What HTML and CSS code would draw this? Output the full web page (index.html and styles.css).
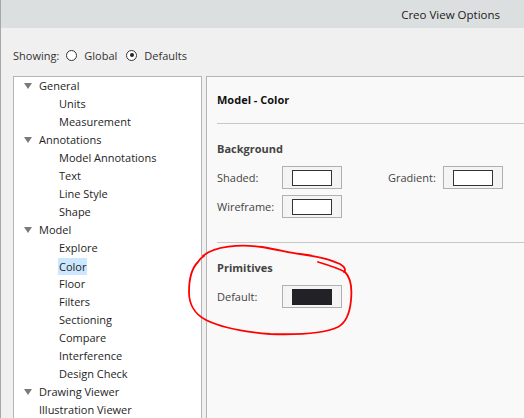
FILE: index.html
```html
<!DOCTYPE html>
<html>
<head>
<meta charset="utf-8">
<link rel="stylesheet" href="styles.css">
</head>
<body>
<div class="window">
  <div class="titlebar"><span class="title">Creo View Options</span></div>
  <div class="content">
    <div class="showing">
      <span class="lbl">Showing:</span>
      <span class="radio"><span class="circle"></span>Global</span>
      <span class="radio"><span class="circle checked"></span>Defaults</span>
    </div>
    <div class="panes">
      <div class="tree">
        <div class="node l1"><span class="tri"></span>General</div>
        <div class="node l2">Units</div>
        <div class="node l2">Measurement</div>
        <div class="node l1"><span class="tri"></span>Annotations</div>
        <div class="node l2">Model Annotations</div>
        <div class="node l2">Text</div>
        <div class="node l2">Line Style</div>
        <div class="node l2">Shape</div>
        <div class="node l1"><span class="tri"></span>Model</div>
        <div class="node l2">Explore</div>
        <div class="node l2"><span class="sel">Color</span></div>
        <div class="node l2">Floor</div>
        <div class="node l2">Filters</div>
        <div class="node l2">Sectioning</div>
        <div class="node l2">Compare</div>
        <div class="node l2">Interference</div>
        <div class="node l2">Design Check</div>
        <div class="node l1"><span class="tri"></span>Drawing Viewer</div>
        <div class="node l1">Illustration Viewer</div>
      </div>
      <div class="detail">
        <div class="heading">Model - Color</div>
        <div class="section">
          <div class="sec-title">Background</div>
          <div class="grid">
            <span class="flabel">Shaded:</span>
            <span class="swatch"><span class="chip white"></span></span>
            <span class="flabel grad">Gradient:</span>
            <span class="swatch"><span class="chip white"></span></span>
            <span class="flabel">Wireframe:</span>
            <span class="swatch"><span class="chip white"></span></span>
          </div>
        </div>
        <div class="section">
          <div class="sec-title">Primitives</div>
          <div class="grid">
            <span class="flabel">Default:</span>
            <span class="swatch"><span class="chip dark"></span></span>
          </div>
        </div>
      </div>
    </div>
  </div>
  <svg class="scribble" width="524" height="418" viewBox="0 0 524 418">
    <path d="M203,256 C214,246 240,244 262,247 C280,250 290,253 300,254 C315,256 330,259 340,264 C345,267 346,270 344,272 M318,262 C328,265 338,268 345,272 C351,278 352,290 351,300 C350,312 347,322 338,327 C325,333 300,335 270,334 C245,332 222,328 206,320 C194,314 189,303 189,292 C189,280 192,268 198,262 C200,259 202,257 204,256"/>
  </svg>
</div>
</body>
</html>
```
FILE: styles.css
```css
html, body {
  margin: 0;
  padding: 0;
}
body {
  width: 524px;
  height: 418px;
  overflow: hidden;
  font-family: "Open Sans", "Noto Sans", sans-serif;
  font-size: 11px;
  color: #1e1e1e;
}
.window {
  position: relative;
  width: 524px;
  height: 418px;
  overflow: hidden;
  background: #f0f0f0;
  border-left: 1px solid #a8a8a8;
  box-sizing: border-box;
}
.titlebar {
  height: 28px;
  background: #dcdfe0;
  display: flex;
  align-items: center;
  justify-content: flex-end;
  padding-right: 24px;
}
.title {
  font-size: 11.5px;
  color: #1a1a1a;
}
.content {
  padding-left: 12px;
}
.showing {
  height: 48px;
  display: flex;
  align-items: center;
  padding-top: 6px;
  box-sizing: border-box;
  color: #333;
}
.lbl {
  margin-right: 7px;
}
.radio {
  display: inline-flex;
  align-items: center;
  margin-right: 9px;
}
.circle {
  width: 11px;
  height: 11px;
  border: 1px solid #333;
  border-radius: 50%;
  background: #fff;
  margin-right: 7px;
  box-sizing: border-box;
  position: relative;
}
.circle.checked::after {
  content: "";
  position: absolute;
  left: 2.5px;
  top: 2.5px;
  width: 4px;
  height: 4px;
  border-radius: 50%;
  background: #222;
}
.panes {
  display: flex;
  gap: 4px;
  height: 342px;
  overflow: hidden;
}
.tree {
  width: 189px;
  flex: none;
  height: 360px;
  background: #fff;
  border: 1px solid #b5b5b5;
  box-sizing: border-box;
}
.node {
  height: 18px;
  line-height: 18px;
  white-space: nowrap;
  color: #1e1e1e;
  display: flex;
  align-items: center;
}
.l1 {
  padding-left: 25px;
}
.l2 {
  padding-left: 45px;
}
.tri {
  width: 0;
  height: 0;
  border-left: 4px solid transparent;
  border-right: 4px solid transparent;
  border-top: 6px solid #7a7a7a;
  margin-left: -15px;
  margin-right: 7px;
}
.sel {
  background: #cce8ff;
  padding: 0 1px;
  margin-left: -1px;
  height: 17px;
  line-height: 17px;
}
.detail {
  flex: 1;
  height: 360px;
  background: #f9f9f9;
  border: 1px solid #b5b5b5;
  border-right: none;
  box-sizing: border-box;
  padding-left: 10px;
}
.heading {
  height: 46px;
  line-height: 46px;
  font-weight: bold;
  color: #111;
  border-bottom: 1px solid #c8c8c8;
}
.section {
  padding-top: 16px;
  padding-bottom: 24px;
  border-bottom: 1px solid #c8c8c8;
}
.section:last-child {
  border-bottom: none;
}
.sec-title {
  font-weight: bold;
  color: #444;
  height: 18px;
  line-height: 18px;
  margin-bottom: 8px;
}
.grid {
  display: grid;
  grid-template-columns: 65px 60px 46px 55px 60px;
  grid-auto-rows: 23px;
  row-gap: 6px;
  align-items: center;
}
.flabel {
  color: #444;
}
.grid .grad {
  grid-column: 4;
  white-space: nowrap;
}
.swatch {
  width: 60px;
  height: 23px;
  box-sizing: border-box;
  border: 1px solid #b0b0b0;
  background: #f4f4f4;
  display: flex;
  align-items: center;
  justify-content: center;
}
.chip {
  width: 40px;
  height: 16px;
  box-sizing: border-box;
}
.chip.white {
  background: #fff;
  border: 1px solid #333;
}
.chip.dark {
  background: #222226;
}
.scribble {
  position: absolute;
  left: -1px;
  top: 0;
  pointer-events: none;
}
.scribble path {
  fill: none;
  stroke: #ff0000;
  stroke-width: 1.8;
  stroke-linecap: round;
}
```
